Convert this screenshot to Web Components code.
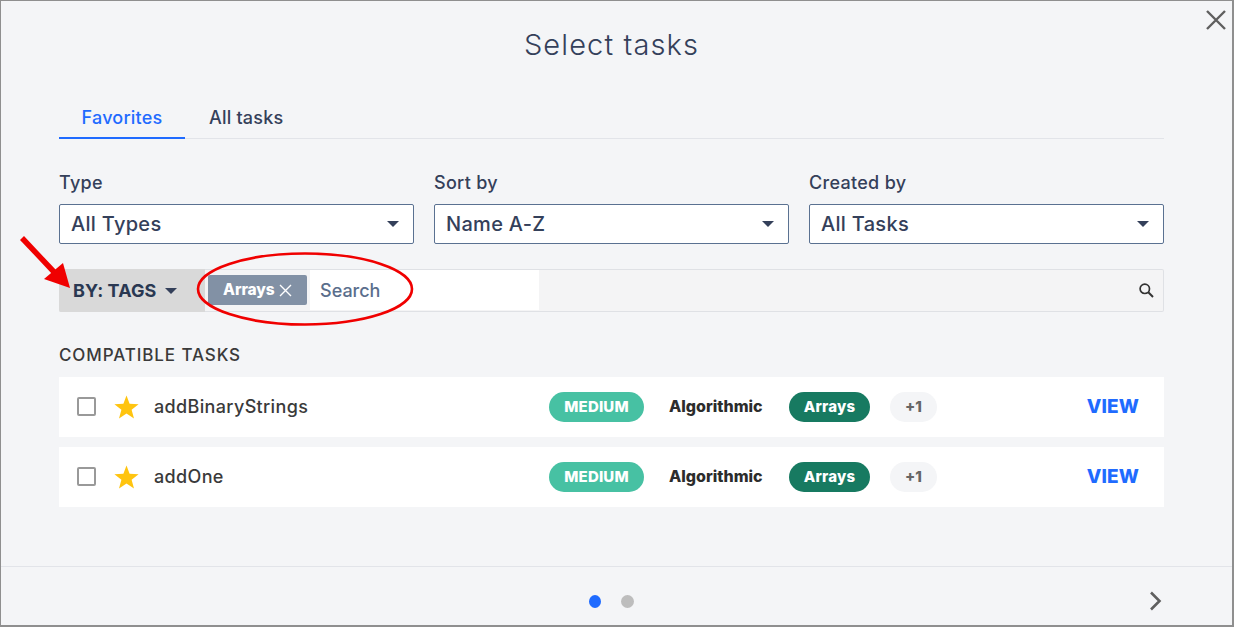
<!DOCTYPE html>
<html><head><meta charset="utf-8">
<style>
html,body{margin:0;padding:0;background:#f4f5f7;font-family:Inter,"Open Sans",sans-serif;}
</style></head><body>
<task-dialog>
  <tab-bar></tab-bar>
  <filter-row></filter-row>
  <tag-bar></tag-bar>
  <section-title>COMPATIBLE TASKS</section-title>
  <task-row name="addBinaryStrings"></task-row>
  <task-row name="addOne"></task-row>
</task-dialog>
<script>
const def=(n,html)=>customElements.define(n,class extends HTMLElement{
  connectedCallback(){ if(this.shadowRoot)return; const s=this.attachShadow({mode:'open'}); s.innerHTML=typeof html==='function'?html(this):html; }
});
const FONT='Inter,"Open Sans",sans-serif';
def('task-dialog',`<style>
:host{display:flex;flex-direction:column;box-sizing:border-box;width:1234px;height:627px;position:relative;border:solid #8f8f8f;border-width:1px 2px 2px 1px;background:#f4f5f7;overflow:hidden;font-family:${FONT}}
h1{margin:0;height:83px;padding-top:25px;box-sizing:border-box;text-align:center;font-weight:300;font-size:29px;line-height:38px;letter-spacing:1.12px;color:#34405a;padding-right:10px;flex:none}
main{flex:1;padding:0 68px 0 58px;min-height:0}
footer{flex:none;height:58px;border-top:1px solid #e2e4e9;display:flex;align-items:center;justify-content:center;position:relative}
.dot{width:12px;height:13px;border-radius:50%;background:#1f6bff}
.dot.g{background:#bdbdbd;width:13px}
.dots{display:flex;gap:20px;margin-top:10px;margin-left:-10px}
.x{position:absolute;right:6px;top:9px}
.next{position:absolute;left:1147px;top:24px}
.ann{position:absolute;left:-1px;top:-1px;pointer-events:none}
</style>
<h1>Select tasks</h1>
<main><slot></slot></main>
<footer><div class="dots"><div class="dot"></div><div class="dot g"></div></div>
<svg class="next" width="16" height="20" viewBox="0 0 16 20"><path d="M3 1.5 L11.5 10 L3 18.5" fill="none" stroke="#5f5f5f" stroke-width="2.6"/></svg></footer>
<svg class="x" width="20" height="20" viewBox="0 0 20 20"><path d="M1 1 L19 19 M19 1 L1 19" stroke="#5f5f5f" stroke-width="2.4" fill="none"/></svg>
<svg class="ann" width="1234" height="627" viewBox="0 0 1234 627">
<ellipse cx="305" cy="289" rx="107" ry="35.5" fill="none" stroke="#f00000" stroke-width="2.6"/>
<path d="M22 238 L55 273" stroke="#f00000" stroke-width="5.5" fill="none"/>
<path d="M70 288 L44 279 L63 263 Z" fill="#f00000"/>
</svg>`);
def('tab-bar',`<style>
:host{display:flex;height:55px;box-sizing:border-box;border-bottom:1px solid #e2e4e9;font-size:18px;font-weight:500;letter-spacing:.2px;color:#34405a}
div{box-sizing:border-box;height:55px;flex:none;display:flex;align-items:center;padding-top:13px;border-bottom:2px solid transparent}
.a{width:126px;justify-content:center;color:#1f6bff;border-bottom-color:#1f6bff}
.b{margin-left:24px}
</style><div class="a">Favorites</div><div class="b">All tasks</div>`);
def('filter-row',`<style>
:host{display:grid;grid-template-columns:repeat(3,355px);column-gap:20px;margin-top:31px}
</style><drop-select label="Type" value="All Types"></drop-select><drop-select label="Sort by" value="Name A-Z"></drop-select><drop-select label="Created by" value="All Tasks"></drop-select>`);
def('drop-select',h=>`<style>
:host{display:block;color:#34405a}
label{display:block;font-size:18px;font-weight:500;line-height:24px;padding-top:1px;margin-bottom:9px;letter-spacing:.3px}
.box{box-sizing:border-box;height:40px;background:#fff;border:1px solid #5a7191;border-radius:2px;display:flex;align-items:center;justify-content:space-between;padding:0 14px 0 11px;font-size:20px;font-weight:500;letter-spacing:.3px}
i{width:0;height:0;border:6.5px solid transparent;border-top:6.5px solid #34405a;border-bottom:0}
</style><label>${h.getAttribute('label')}</label><div class="box"><span>${h.getAttribute('value')}</span><i></i></div>`);
def('tag-bar',`<style>
:host{display:flex;box-sizing:border-box;height:43px;margin-top:25px;background:#f4f4f5;border:1px solid #dfe1e5;border-left:0;border-radius:2px;position:relative;align-items:stretch}
.by{flex:none;width:146px;margin:-1px 0;background:#d9d9d9;border-radius:2px 0 0 2px;display:flex;align-items:center;box-sizing:border-box;padding-left:14px;font-size:18px;font-weight:700;color:#2a3852;letter-spacing:.1px}
.by i{width:0;height:0;border:6.5px solid transparent;border-top:6.5px solid #34405a;border-bottom:0;margin-left:8px;position:relative;left:0}
.by i{margin-left:9px}
.chip{flex:none;margin:5px 0 5px 3px;width:99px;height:30px;box-sizing:border-box;background:#8291a5;border-radius:2px;color:#fff;font-size:15.5px;font-weight:800;display:flex;align-items:center;padding-left:15px;padding-bottom:1px;letter-spacing:-.05px}
.chip svg{margin-left:4px;margin-top:1px}
.in{flex:none;margin:0 0 1px 3px;width:229px;background:#fff;color:#5a6e8c;font-size:18px;font-weight:500;display:flex;align-items:center;padding-left:10px;box-sizing:border-box}
.s{position:absolute;right:8px;top:12px}
</style><div class="by">BY: TAGS<i></i></div><div class="chip">Arrays<svg width="13" height="13" viewBox="0 0 13 13"><path d="M1 1 L12 12 M12 1 L1 12" stroke="#fff" stroke-width="1.4" fill="none"/></svg></div><div class="in">Search</div>
<svg class="s" width="17" height="17" viewBox="0 0 17 17"><circle cx="6.8" cy="6.8" r="4.7" fill="none" stroke="#333" stroke-width="1.7"/><path d="M10.3 10.3 L15 15" stroke="#333" stroke-width="2" fill="none"/></svg>`);
def('section-title',`<style>
:host{display:block;margin-top:31px;margin-bottom:10px;font-size:17px;font-weight:500;line-height:24px;color:#3a3a3a;letter-spacing:.9px;white-space:nowrap}
</style><slot></slot>`);
def('task-row',h=>`<style>
:host{display:flex;align-items:center;box-sizing:border-box;height:60px;background:#fff;margin-bottom:10px;color:#333;position:relative}
.cb{flex:none;box-sizing:border-box;width:19px;height:19px;margin-left:18px;margin-bottom:1px;border:2px solid #999;border-radius:2px;background:#fff}
svg{flex:none;margin-left:18px;margin-bottom:1px}
.n{flex:none;width:395px;margin-left:15px;padding-bottom:2px;font-size:18px;font-weight:500;letter-spacing:.35px;color:#3a3a3a}
.p{flex:none;box-sizing:border-box;height:30px;padding-bottom:2px;border-radius:15px;display:flex;align-items:center;justify-content:center;font-size:15px;font-weight:800;letter-spacing:.15px}
.m{width:95px;background:#47c1a3;color:#fff}
.t{flex:none;width:93px;margin-left:25px;padding-bottom:2px;font-size:16px;font-weight:800;letter-spacing:0;color:#2c2c2c;white-space:nowrap}
.ar{width:81px;margin-left:27px;background:#177a61;color:#fff;letter-spacing:.2px}
.pl{width:47px;margin-left:20px;background:#f4f5f7;color:#666}
.v{margin-left:auto;margin-right:25px;padding-bottom:1px;font-size:19px;font-weight:800;color:#1f6bff;letter-spacing:.1px}
</style><div class="cb"></div><svg width="25" height="24" viewBox="0 0 25 24"><path d="M12.5 0.5 L15.6 8.7 L24.6 9.2 L17.6 14.8 L20 23.5 L12.5 18.6 L5 23.5 L7.4 14.8 L0.4 9.2 L9.4 8.7 Z" fill="#ffc40f"/></svg>
<div class="n">${h.getAttribute('name')}</div><div class="p m">MEDIUM</div><div class="t">Algorithmic</div><div class="p ar">Arrays</div><div class="p pl">+1</div><div class="v">VIEW</div>`);
</script></body></html>
